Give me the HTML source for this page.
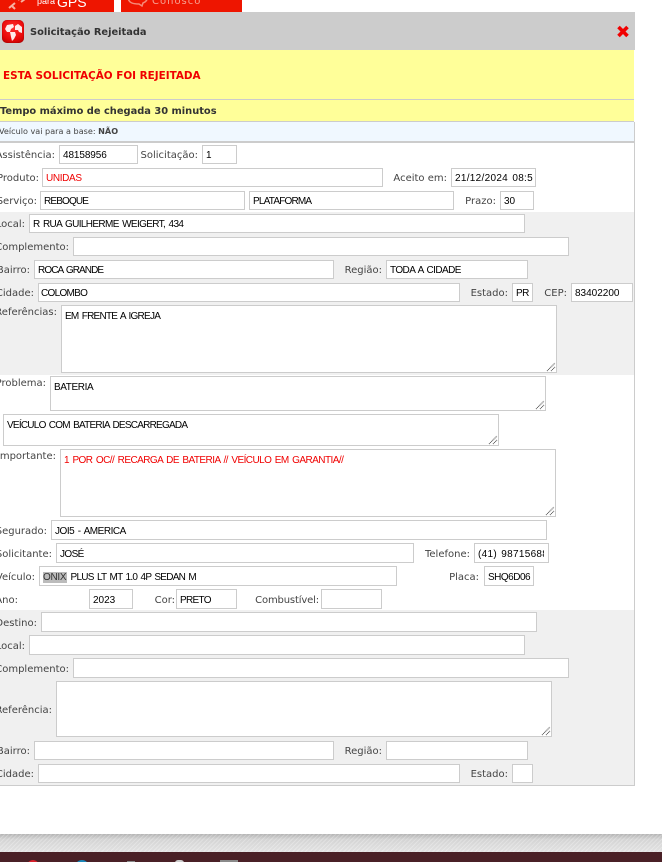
<!DOCTYPE html>
<html><head><meta charset="utf-8"><style>
html,body{margin:0;padding:0;background:#fff}
#p{position:relative;width:662px;height:862px;overflow:hidden;background:#fff;font-family:"DejaVu Sans","Liberation Sans",sans-serif}
#p div{position:absolute;box-sizing:border-box}
.l{font-size:10px;line-height:13px;color:#444;white-space:nowrap}
.i{background:#fff;border:1px solid #ccc;font:10px/19px "Liberation Sans",sans-serif;color:#000;padding:0 3px;overflow:hidden;white-space:nowrap;letter-spacing:-.5px;word-spacing:1.2px}
.t{background:#fff;border:1px solid #ccc;font:10px/13px "Liberation Sans",sans-serif;color:#000;padding:4px 3px 3px;overflow:hidden;white-space:nowrap;letter-spacing:-.5px;word-spacing:1.2px}
.r{color:#f00000}
.h{height:20px;line-height:22px}
.c{display:block;overflow:hidden}
svg{position:absolute}
</style></head><body><div id="p">
<div style="left:0;top:0;width:114px;height:12px;background:#ee1500;overflow:hidden"><svg style="left:7px;top:-4px" width="20" height="14" viewBox="0 0 20 14"><path d="M2 12L8 7M5 10l3 3M11 4l4-3M14 6l4-3" stroke="#f7b0a0" stroke-width="2" fill="none"/></svg><div style="left:37px;top:-5px;color:#fff;font:9px/12px 'Liberation Sans',sans-serif">para</div><div style="left:57px;top:-7px;color:#fff;font:14px/18px 'Liberation Sans',sans-serif">GPS</div></div>
<div style="left:121px;top:0;width:121px;height:12px;background:#ee1500;overflow:hidden"><svg style="left:6px;top:-4px" width="22" height="12" viewBox="0 0 22 12"><path d="M1 2C2 7 6 8 12 8L15 10L16 7C19 6 20 4 21 1" stroke="#f58a78" stroke-width="1.5" fill="none"/></svg><div style="left:31px;top:-5px;color:#f6a090;font:10px/14px 'DejaVu Sans',sans-serif;letter-spacing:1px">Conosco</div></div>

<div style="left:0;top:12px;width:635px;height:38px;background:#ccc"></div>
<div style="left:2px;top:20px;width:22px;height:23px;border-radius:5px;background:radial-gradient(circle at 50% 35%,#ff3030,#e80808 65%,#a80000);box-shadow:inset 0 0 1px #800"></div>
<svg style="left:2px;top:20px" width="22" height="23" viewBox="0 0 22 23"><path d="M3 9L5 5L11 4L12 7L9 9L8 12L5 12Z M13 6L16 4L20 7L20 13L17 12L16 10L13 10Z M8 12L13 12L14 15L12 19L10 21L9 17Z" fill="#fff" opacity=".92"/></svg>
<div style="left:30px;top:26px;font-size:9.85px;line-height:14px;font-weight:bold;color:#333;white-space:nowrap">Solicitação Rejeitada</div>
<svg style="left:615px;top:24px" width="16" height="15" viewBox="0 0 16 15"><path d="M3.5 3L12.5 12M12.5 3L3.5 12" stroke="#f00000" stroke-width="3.6" fill="none"/></svg>

<div style="left:0;top:50px;width:634px;height:49px;background:#ffff99"></div>
<div style="left:3px;top:69px;font-size:10.4px;line-height:14px;font-weight:bold;color:#f00000;white-space:nowrap">ESTA SOLICITAÇÃO FOI REJEITADA</div>
<div style="left:0;top:99px;width:634px;height:1px;background:#ccc"></div>
<div style="left:0;top:100px;width:634px;height:21px;background:#ffff99"></div>
<div style="left:0;top:105px;font-size:9.87px;line-height:14px;font-weight:bold;color:#333;white-space:nowrap">Tempo máximo de chegada 30 minutos</div>
<div style="left:0;top:121px;width:634px;height:1px;background:#ccc"></div>
<div style="left:0;top:122px;width:634px;height:19px;background:#f0f8ff"></div>
<div class="l" style="left:-1px;top:125px;font-size:8.1px;line-height:12px">Veículo vai para a base: <b>NÃO</b></div>
<div style="left:0;top:141px;width:634px;height:2px;background:#ccc"></div>

<div style="left:634px;top:122px;width:1px;height:664px;background:#ccc"></div>
<div style="left:0;top:212px;width:634px;height:163px;background:#f0f0f0"></div>
<div style="left:0;top:610px;width:634px;height:175px;background:#f0f0f0"></div>
<div style="left:0;top:785px;width:635px;height:1px;background:#ccc"></div>

<div class="l" style="right:607px;top:149px">Assistência:</div><div class="i" style="left:59px;top:145px;width:79px;height:19px;letter-spacing:-.1px">48158956</div>
<div class="l" style="right:464px;top:149px">Solicitação:</div><div class="i" style="left:202px;top:145px;width:35px;height:19px">1</div>

<div class="l" style="right:623px;top:172px">Produto:</div><div class="i r" style="left:42px;top:168px;width:341px;height:19px;letter-spacing:-.35px">UNIDAS</div>
<div class="l" style="right:215px;top:172px">Aceito em:</div><div class="i" style="left:451px;top:168px;width:85px;height:19px;letter-spacing:.3px;padding-right:2px"><span class="c">21/12/2024 08:56</span></div>

<div class="l" style="right:625px;top:195px">Serviço:</div><div class="i" style="left:40px;top:191px;width:205px;height:19px;letter-spacing:-.85px">REBOQUE</div>
<div class="i" style="left:249px;top:191px;width:205px;height:19px;letter-spacing:-.8px">PLATAFORMA</div>
<div class="l" style="right:166px;top:195px">Prazo:</div><div class="i" style="left:500px;top:191px;width:34px;height:19px;letter-spacing:0">30</div>

<div class="l" style="right:637px;top:218px">Local:</div><div class="i" style="left:29px;top:214px;width:496px;height:19px;letter-spacing:-.63px">R RUA GUILHERME WEIGERT, 434</div>
<div class="l" style="right:593px;top:241px">Complemento:</div><div class="i" style="left:73px;top:237px;width:496px;height:19px"></div>
<div class="l" style="right:632px;top:264px">Bairro:</div><div class="i" style="left:34px;top:260px;width:300px;height:19px;letter-spacing:-.9px">ROCA GRANDE</div>
<div class="l" style="right:280px;top:264px">Região:</div><div class="i" style="left:386px;top:260px;width:142px;height:19px;letter-spacing:-.58px">TODA A CIDADE</div>
<div class="l" style="right:628px;top:287px">Cidade:</div><div class="i" style="left:38px;top:283px;width:422px;height:19px;padding-left:2px;letter-spacing:-.7px">COLOMBO</div>
<div class="l" style="right:154px;top:287px">Estado:</div><div class="i" style="left:512px;top:283px;width:21px;height:19px">PR</div>
<div class="l" style="right:95px;top:287px">CEP:</div><div class="i" style="left:571px;top:283px;width:62px;height:19px;letter-spacing:0">83402200</div>
<div class="l" style="right:605px;top:306px">Referências:</div><div class="t" style="left:61px;top:305px;width:496px;height:68px;letter-spacing:-.75px">EM FRENTE A IGREJA</div>
<svg style="left:546px;top:362px" width="10" height="10"><path d="M1 9L9 1M5 9L9 5" stroke="#555" stroke-width="1" stroke-dasharray="1 .6" fill="none"/></svg>

<div class="l" style="right:616px;top:377px">Problema:</div><div class="t" style="left:50px;top:376px;width:496px;height:35px;letter-spacing:-.4px">BATERIA</div>
<svg style="left:535px;top:400px" width="10" height="10"><path d="M1 9L9 1M5 9L9 5" stroke="#555" stroke-width="1" stroke-dasharray="1 .6" fill="none"/></svg>
<div class="t" style="left:3px;top:414px;width:496px;height:32px;letter-spacing:-.76px">VEÍCULO COM BATERIA DESCARREGADA</div>
<svg style="left:488px;top:435px" width="10" height="10"><path d="M1 9L9 1M5 9L9 5" stroke="#555" stroke-width="1" stroke-dasharray="1 .6" fill="none"/></svg>
<div class="l" style="right:606px;top:450px">Importante:</div><div class="t r" style="left:60px;top:449px;width:496px;height:68px;letter-spacing:-.55px">1 POR OC// RECARGA DE BATERIA // VEÍCULO EM GARANTIA//</div>
<svg style="left:545px;top:506px" width="10" height="10"><path d="M1 9L9 1M5 9L9 5" stroke="#555" stroke-width="1" stroke-dasharray="1 .6" fill="none"/></svg>

<div class="l" style="right:615px;top:525px">Segurado:</div><div class="i h" style="left:51px;top:520px;width:496px;letter-spacing:-.47px">JOI5 - AMERICA</div>
<div class="l" style="right:610px;top:548px">Solicitante:</div><div class="i h" style="left:56px;top:543px;width:358px;letter-spacing:-.6px">JOSÉ</div>
<div class="l" style="right:192px;top:548px">Telefone:</div><div class="i h" style="left:474px;top:543px;width:75px;letter-spacing:.3px;padding-right:4px"><span class="c">(41) 987156886</span></div>
<div class="l" style="right:627px;top:571px">Veículo:</div><div class="i h" style="left:39px;top:566px;width:358px;letter-spacing:-.73px"><span style="background:#bbb;color:#333;padding-right:1px;letter-spacing:-.3px">ONIX</span> PLUS LT MT 1.0 4P SEDAN M</div>
<div class="l" style="right:183px;top:571px">Placa:</div><div class="i h" style="left:484px;top:566px;width:50px">SHQ6D06</div>
<div class="l" style="right:644px;top:594px">Ano:</div><div class="i h" style="left:89px;top:589px;width:44px;letter-spacing:0">2023</div>
<div class="l" style="right:487px;top:594px">Cor:</div><div class="i h" style="left:176px;top:589px;width:61px;letter-spacing:-.7px">PRETO</div>
<div class="l" style="right:343px;top:594px;letter-spacing:-.15px">Combustível:</div><div class="i h" style="left:321px;top:589px;width:61px"></div>

<div class="l" style="right:625px;top:617px">Destino:</div><div class="i h" style="left:41px;top:612px;width:496px"></div>
<div class="l" style="right:637px;top:640px">Local:</div><div class="i h" style="left:29px;top:635px;width:496px"></div>
<div class="l" style="right:593px;top:663px">Complemento:</div><div class="i h" style="left:73px;top:658px;width:496px"></div>
<div class="l" style="right:610px;top:704px">Referência:</div><div class="t" style="left:56px;top:681px;width:496px;height:56px"></div>
<svg style="left:541px;top:726px" width="10" height="10"><path d="M1 9L9 1M5 9L9 5" stroke="#555" stroke-width="1" stroke-dasharray="1 .6" fill="none"/></svg>
<div class="l" style="right:632px;top:745px">Bairro:</div><div class="i" style="left:34px;top:741px;width:300px;height:19px"></div>
<div class="l" style="right:280px;top:745px">Região:</div><div class="i" style="left:386px;top:741px;width:142px;height:19px"></div>
<div class="l" style="right:628px;top:768px">Cidade:</div><div class="i" style="left:38px;top:764px;width:422px;height:19px"></div>
<div class="l" style="right:154px;top:768px">Estado:</div><div class="i" style="left:512px;top:764px;width:21px;height:19px"></div>

<div style="left:0;top:834px;width:662px;height:18px;background:repeating-linear-gradient(135deg,rgba(255,255,255,.18) 0 1px,rgba(0,0,0,.02) 1px 3px),linear-gradient(#b8b8b8,#d8d8d8 30%,#e6e6e6)"></div>
<div style="left:0;top:852px;width:662px;height:10px;background:#4a2026"></div>
<div style="left:27px;top:860px;width:12px;height:12px;border-radius:50%;background:#d8202c"></div>
<div style="left:75px;top:860px;width:14px;height:14px;border-radius:50%;background:#1a86b8"></div>
<div style="left:127px;top:861px;width:8px;height:6px;background:#888"></div>
<div style="left:175px;top:860px;width:9px;height:6px;border-radius:3px;background:#ccc"></div>
<div style="left:220px;top:860px;width:18px;height:6px;background:#8a8a8a"></div>
</div></body></html>
